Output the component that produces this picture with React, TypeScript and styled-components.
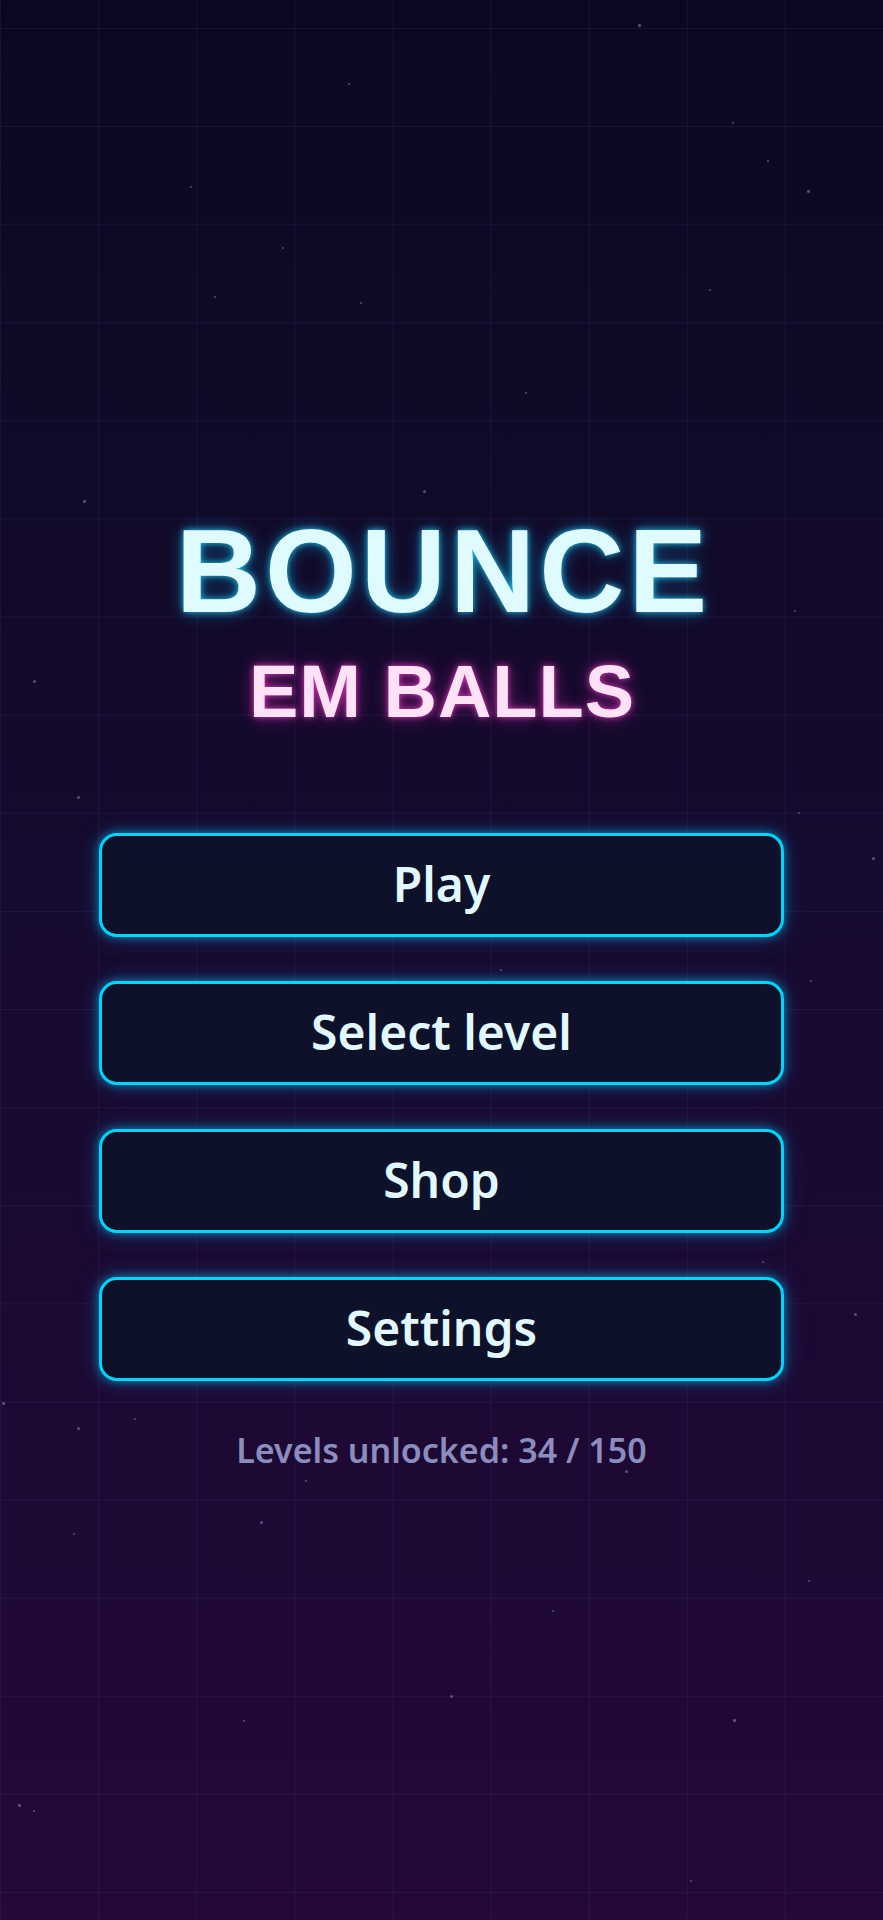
import styled, { createGlobalStyle } from 'styled-components';

const GlobalStyle = createGlobalStyle`
  * { box-sizing: border-box; }
  html, body {
    margin: 0;
    padding: 0;
    background: #0a0820;
  }
  button { font: inherit; }
`;

// star positions, measured from the reference
const stars: [number, number, number][] = [
  [638, 24, 2.5], [348, 83, 2], [190, 186, 2], [732, 122, 2], [767, 160, 2],
  [807, 190, 2.5], [282, 247, 2], [360, 302, 2], [709, 289, 2], [214, 296, 2],
  [525, 392, 2], [83, 500, 2.5], [423, 490, 3], [33, 680, 3], [794, 610, 2],
  [77, 796, 3], [798, 812, 2], [872, 857, 3], [500, 969, 2], [810, 980, 2],
  [762, 1261, 2], [854, 1313, 3], [2, 1402, 2.5], [77, 1427, 3], [260, 1521, 3],
  [134, 1418, 2], [73, 1533, 2], [450, 1695, 3], [552, 1610, 2], [243, 1720, 2],
  [733, 1719, 2.5], [18, 1804, 2.5], [33, 1810, 2], [808, 1580, 2], [625, 1470, 3],
  [386, 1327, 2], [568, 1330, 2], [305, 1480, 2], [690, 1880, 2],
];

const Page = styled.main`
  position: relative;
  min-height: 1920px;
  overflow: hidden;
  background-color: #0a0820;
  background-image:
    linear-gradient(rgba(70, 60, 140, 0.2) 1px, transparent 1px),
    linear-gradient(90deg, rgba(70, 60, 140, 0.2) 1px, transparent 1px),
    linear-gradient(180deg, #0a0820 0%, #160a2e 45%, #230838 100%);
  background-size: 98.11px 98.11px, 98.11px 98.11px, 100% 100%;
  background-position: center, center, 0 0;
  display: flex;
  flex-direction: column;
  align-items: center;
  padding: 512px 99px 0;
`;

const Star = styled.span<{ $x: number; $y: number; $s: number }>`
  position: absolute;
  left: ${({ $x }) => $x}px;
  top: ${({ $y }) => $y}px;
  width: ${({ $s }) => $s}px;
  height: ${({ $s }) => $s}px;
  border-radius: 50%;
  background: rgba(190, 190, 230, 0.4);
  pointer-events: none;
`;

const Title = styled.h1`
  position: relative;
  margin: 0;
  font-family: 'Liberation Sans', Arial, sans-serif;
  font-weight: 700;
  font-size: 118px;
  line-height: 1;
  letter-spacing: 4px;
  margin-right: -4px;
  color: #dffbff;
  text-shadow:
    0 0 6px rgba(40, 220, 255, 0.85),
    0 0 18px rgba(0, 190, 255, 0.45);
`;

const Subtitle = styled.h2`
  position: relative;
  margin: 25px 0 0;
  font-family: 'Liberation Sans', Arial, sans-serif;
  font-weight: 700;
  font-size: 74px;
  line-height: 1;
  letter-spacing: 1px;
  margin-right: -1px;
  color: #ffe2f6;
  text-shadow:
    0 0 6px rgba(255, 70, 210, 0.8),
    0 0 18px rgba(230, 40, 190, 0.45);
`;

const Menu = styled.nav`
  position: relative;
  width: 100%;
  margin-top: 104px;
  display: flex;
  flex-direction: column;
  gap: 44px;
`;

const MenuButton = styled.button`
  display: flex;
  align-items: center;
  justify-content: center;
  width: 100%;
  height: 104px;
  padding: 0 0 4px;
  border: 3px solid #00d4f7;
  border-radius: 18px;
  background: #0d112a;
  box-shadow:
    0 0 10px rgba(0, 200, 255, 0.6),
    0 0 24px rgba(0, 170, 255, 0.28);
  color: #e2f8ff;
  font-family: 'Noto Sans', 'Open Sans', sans-serif;
  font-weight: 600;
  font-size: 48px;
  cursor: pointer;
`;

const Progress = styled.p`
  position: relative;
  margin: 49px 0 0;
  font-family: 'Noto Sans', 'Open Sans', sans-serif;
  font-weight: 600;
  font-size: 34px;
  line-height: 1.2;
  color: #8a8dbd;
`;

const items = ['Play', 'Select level', 'Shop', 'Settings'];

export default function App() {
  return (
    <>
      <GlobalStyle />
      <Page>
        {stars.map(([x, y, s], i) => (
          <Star key={i} $x={x} $y={y} $s={s} />
        ))}
        <Title>BOUNCE</Title>
        <Subtitle>EM BALLS</Subtitle>
        <Menu>
          {items.map((label) => (
            <MenuButton key={label}>{label}</MenuButton>
          ))}
        </Menu>
        <Progress>Levels unlocked: 34 / 150</Progress>
      </Page>
    </>
  );
}
